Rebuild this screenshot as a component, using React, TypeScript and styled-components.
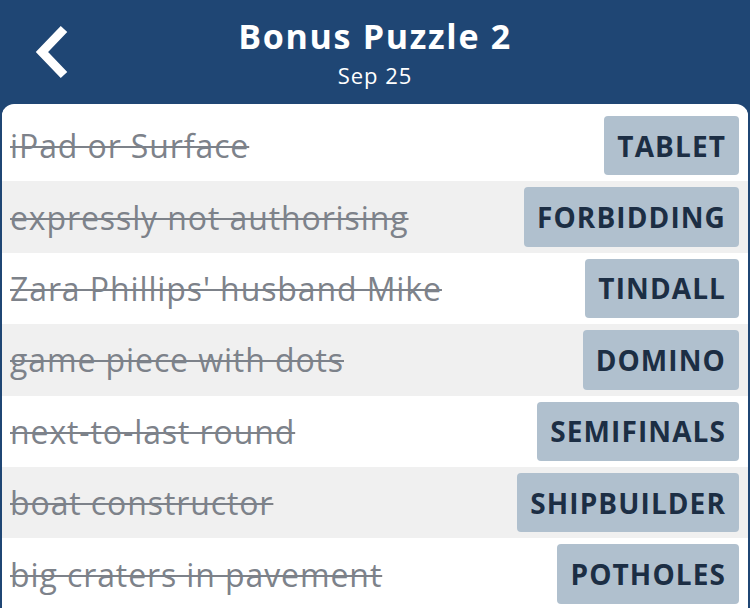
import React from 'react';
import styled, { createGlobalStyle } from 'styled-components';

const GlobalStyle = createGlobalStyle`
  html, body {
    margin: 0;
    padding: 0;
    background: #1f4674;
    font-family: 'Open Sans', 'Lato', sans-serif;
    overflow: hidden;
  }
`;

const Page = styled.div`
  width: 750px;
  height: 608px;
  display: flex;
  flex-direction: column;
  background: #1f4674;
`;

const Header = styled.header`
  height: 104px;
  position: relative;
  display: flex;
  flex-direction: column;
  align-items: center;
  color: #ffffff;
`;

const BackButton = styled.button`
  position: absolute;
  left: 26px;
  top: 23px;
  width: 50px;
  height: 60px;
  padding: 0;
  border: none;
  background: none;
  cursor: pointer;
`;

const Title = styled.h1`
  margin: 13px 0 0;
  font-size: 34px;
  font-weight: 700;
  letter-spacing: 1.7px;
  line-height: 46px;
`;

const Subtitle = styled.div`
  font-size: 22px;
  letter-spacing: 1px;
  line-height: 28px;
  margin-top: 2px;
`;

const Panel = styled.main`
  flex: 1;
  margin: 0 2px;
  padding-top: 6px;
  background: #ffffff;
  border-radius: 12px 12px 0 0;
  overflow: hidden;
`;

const Row = styled.div<{ $shaded: boolean }>`
  height: 71.4px;
  box-sizing: border-box;
  padding: 6px 9px 6px 8px;
  display: flex;
  align-items: center;
  justify-content: space-between;
  background: ${p => (p.$shaded ? '#f0f0f0' : '#ffffff')};
`;

const Clue = styled.span`
  font-size: 32px;
  letter-spacing: 0.9px;
  color: #7d828a;
  text-decoration: line-through;
  text-decoration-thickness: 2px;
  white-space: nowrap;
`;

const Answer = styled.span`
  height: 100%;
  display: flex;
  align-items: center;
  padding: 0 13px;
  background: #b0c0ce;
  border-radius: 4px;
  color: #1c2e44;
  font-size: 28px;
  font-weight: 700;
  letter-spacing: 1.1px;
`;

const entries = [
  { clue: 'iPad or Surface', answer: 'TABLET' },
  { clue: 'expressly not authorising', answer: 'FORBIDDING' },
  { clue: "Zara Phillips' husband Mike", answer: 'TINDALL' },
  { clue: 'game piece with dots', answer: 'DOMINO' },
  { clue: 'next-to-last round', answer: 'SEMIFINALS' },
  { clue: 'boat constructor', answer: 'SHIPBUILDER' },
  { clue: 'big craters in pavement', answer: 'POTHOLES' },
];

export default function App() {
  return (
    <Page>
      <GlobalStyle />
      <Header>
        <BackButton aria-label="Back">
          <svg width="50" height="60" viewBox="0 0 50 60">
            <polyline
              points="38,6 16,29 38,52"
              fill="none"
              stroke="#ffffff"
              strokeWidth="9"
              strokeLinejoin="miter"
            />
          </svg>
        </BackButton>
        <Title>Bonus Puzzle 2</Title>
        <Subtitle>Sep 25</Subtitle>
      </Header>
      <Panel>
        {entries.map((e, i) => (
          <Row key={e.answer} $shaded={i % 2 === 1}>
            <Clue>{e.clue}</Clue>
            <Answer>{e.answer}</Answer>
          </Row>
        ))}
      </Panel>
    </Page>
  );
}
